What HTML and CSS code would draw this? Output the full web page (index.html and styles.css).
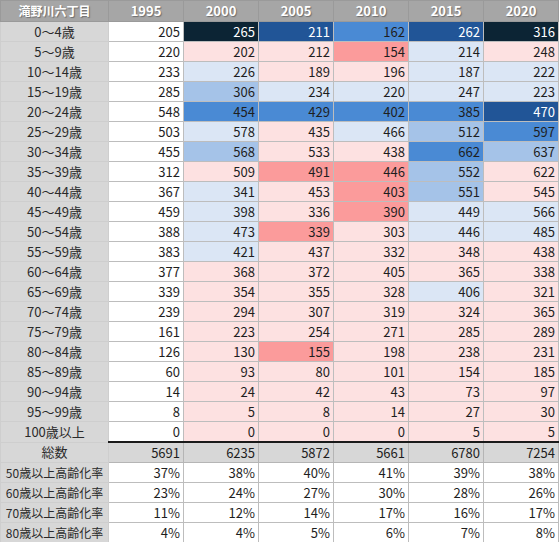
FILE: index.html
```html
<!DOCTYPE html>
<html lang="ja">
<head>
<meta charset="utf-8">
<link rel="stylesheet" href="styles.css">
</head>
<body>
<table class="grid">
<colgroup><col class="c0"><col class="cn"><col class="cn"><col class="cn"><col class="cn"><col class="cn"><col class="cn"></colgroup>
<thead>
<tr><th class="corner">滝野川六丁目</th><th>1995</th><th>2000</th><th>2005</th><th>2010</th><th>2015</th><th>2020</th></tr>
</thead>
<tbody>
<tr><td class="lab">0～4歳</td><td>205</td><td class="b5">265</td><td class="b4">211</td><td class="b3">162</td><td class="b4">262</td><td class="b5">316</td></tr>
<tr><td class="lab">5～9歳</td><td>220</td><td class="p">202</td><td class="p">212</td><td class="s">154</td><td class="b1">214</td><td class="p">248</td></tr>
<tr><td class="lab">10～14歳</td><td>233</td><td class="b1">226</td><td class="p">189</td><td class="p">196</td><td class="b1">187</td><td class="b1">222</td></tr>
<tr><td class="lab">15～19歳</td><td>285</td><td class="b2">306</td><td class="b1">234</td><td class="b1">220</td><td class="b1">247</td><td class="b1">223</td></tr>
<tr><td class="lab">20～24歳</td><td>548</td><td class="b3">454</td><td class="b3">429</td><td class="b3">402</td><td class="b3">385</td><td class="b4">470</td></tr>
<tr><td class="lab">25～29歳</td><td>503</td><td class="b1">578</td><td class="p">435</td><td class="b1">466</td><td class="b2">512</td><td class="b3">597</td></tr>
<tr><td class="lab">30～34歳</td><td>455</td><td class="b2">568</td><td class="p">533</td><td class="p">438</td><td class="b3">662</td><td class="b2">637</td></tr>
<tr><td class="lab">35～39歳</td><td>312</td><td class="p">509</td><td class="s">491</td><td class="s">446</td><td class="b2">552</td><td class="p">622</td></tr>
<tr><td class="lab">40～44歳</td><td>367</td><td class="b1">341</td><td class="p">453</td><td class="s">403</td><td class="b2">551</td><td class="p">545</td></tr>
<tr><td class="lab">45～49歳</td><td>459</td><td class="b1">398</td><td class="p">336</td><td class="s">390</td><td class="b1">449</td><td class="b1">566</td></tr>
<tr><td class="lab">50～54歳</td><td>388</td><td class="b1">473</td><td class="s">339</td><td class="p">303</td><td class="b1">446</td><td class="b1">485</td></tr>
<tr><td class="lab">55～59歳</td><td>383</td><td class="b1">421</td><td class="p">437</td><td class="p">332</td><td class="p">348</td><td class="p">438</td></tr>
<tr><td class="lab">60～64歳</td><td>377</td><td class="p">368</td><td class="p">372</td><td class="p">405</td><td class="p">365</td><td class="p">338</td></tr>
<tr><td class="lab">65～69歳</td><td>339</td><td class="p">354</td><td class="p">355</td><td class="p">328</td><td class="b1">406</td><td class="p">321</td></tr>
<tr><td class="lab">70～74歳</td><td>239</td><td class="p">294</td><td class="p">307</td><td class="p">319</td><td class="p">324</td><td class="p">365</td></tr>
<tr><td class="lab">75～79歳</td><td>161</td><td class="p">223</td><td class="p">254</td><td class="p">271</td><td class="p">285</td><td class="p">289</td></tr>
<tr><td class="lab">80～84歳</td><td>126</td><td class="p">130</td><td class="s">155</td><td class="p">198</td><td class="p">238</td><td class="p">231</td></tr>
<tr><td class="lab">85～89歳</td><td>60</td><td class="p">93</td><td class="p">80</td><td class="p">101</td><td class="p">154</td><td class="p">185</td></tr>
<tr><td class="lab">90～94歳</td><td>14</td><td class="p">24</td><td class="p">42</td><td class="p">43</td><td class="p">73</td><td class="p">97</td></tr>
<tr><td class="lab">95～99歳</td><td>8</td><td class="p">5</td><td class="p">8</td><td class="p">14</td><td class="p">27</td><td class="p">30</td></tr>
<tr class="last"><td class="lab">100歳以上</td><td>0</td><td class="p">0</td><td class="p">0</td><td class="p">0</td><td class="p">5</td><td class="p">5</td></tr>
<tr class="total"><td class="lab">総数</td><td>5691</td><td>6235</td><td>5872</td><td>5661</td><td>6780</td><td>7254</td></tr>
<tr><td class="lab rate">50歳以上高齢化率</td><td>37%</td><td>38%</td><td>40%</td><td>41%</td><td>39%</td><td>38%</td></tr>
<tr><td class="lab rate">60歳以上高齢化率</td><td>23%</td><td>24%</td><td>27%</td><td>30%</td><td>28%</td><td>26%</td></tr>
<tr><td class="lab rate">70歳以上高齢化率</td><td>11%</td><td>12%</td><td>14%</td><td>17%</td><td>16%</td><td>17%</td></tr>
<tr><td class="lab rate">80歳以上高齢化率</td><td>4%</td><td>4%</td><td>5%</td><td>6%</td><td>7%</td><td>8%</td></tr>
</tbody>
</table>
</body>
</html>
```

FILE: styles.css
```css
html, body {
  margin: 0;
  padding: 0;
  background: #ffffff;
}
.grid {
  border-collapse: collapse;
  table-layout: fixed;
  width: 559px;
  font-family: "Noto Sans CJK JP", "DejaVu Sans", sans-serif;
  font-size: 13px;
  color: #1e1e1e;
}
.c0 { width: 108px; }
.cn { width: 75px; }
.grid th {
  height: 20px;
  padding: 0 4px;
  background: #a6a6a6;
  color: #ffffff;
  font-weight: bold;
  text-align: center;
  border: 1px solid #9a9a9a;
  text-shadow: 1px 1px 1px #6e6e6e;
  line-height: 18px;
}
.grid th.corner { font-size: 12px; }
.grid td {
  height: 19px;
  padding: 0 3px 0 4px;
  line-height: 18px;
  text-align: right;
  border: 1px solid #bdbdbd;
  background: #ffffff;
  white-space: nowrap;
  overflow: hidden;
}
.grid td.lab {
  background: #d7d7d7;
  text-align: center;
  color: #2a2a2a;
  border-color: #cecece;
  padding: 0;
}
.grid td.rate { font-size: 12px; }
.last td { border-bottom: 2px solid #1a1a1a; }
.last td.lab { border-bottom: 1px solid #cecece; }
.total td { background: #d7d7d7; border-color: #b5b5b5; }
.grid td.p { background: #fde1e1; }
.grid td.s { background: #fb9b9b; }
.grid td.b1 { background: #dbe6f5; }
.grid td.b2 { background: #a5c3e8; }
.grid td.b3 { background: #4a8ad4; }
.grid td.b4 { background: #215597; color: #ffffff; }
.grid td.b5 { background: #0c2434; color: #ffffff; }
```
